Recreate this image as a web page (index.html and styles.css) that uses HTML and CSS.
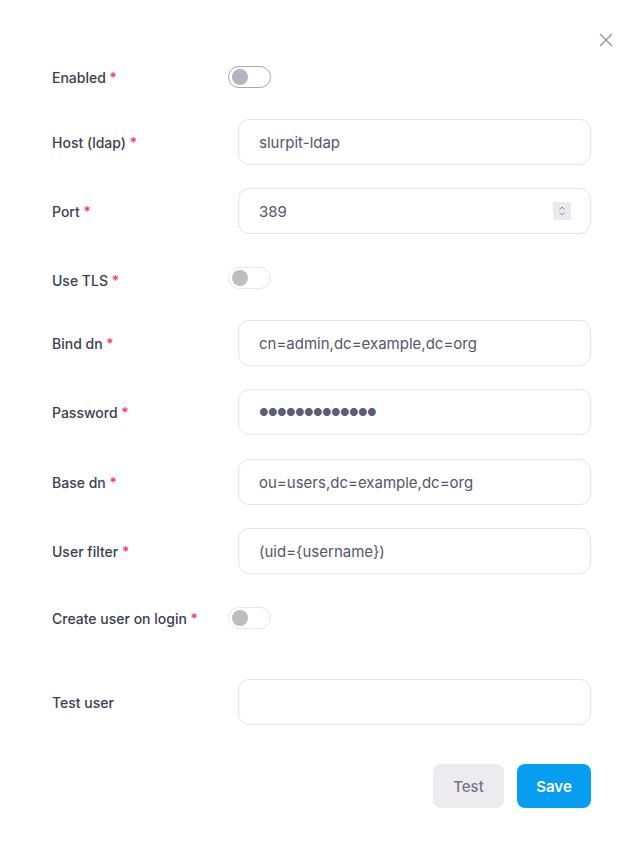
FILE: index.html
```html
<!DOCTYPE html>
<html>
<head>
<meta charset="utf-8">
<link rel="stylesheet" href="styles.css">
</head>
<body>
<div class="modal">
  <button class="close" aria-label="Close">
    <svg width="14" height="14" viewBox="0 0 14 14"><path d="M1.5 1.5L12.5 12.5M12.5 1.5L1.5 12.5" stroke="#9a9aae" stroke-width="1.5" stroke-linecap="round"/></svg>
  </button>
  <form class="form">
    <div class="row row-toggle r-enabled">
      <label class="label">Enabled <span class="req">*</span></label>
      <span class="toggle toggle-focus"><span class="knob"></span></span>
    </div>
    <div class="row">
      <label class="label">Host (ldap) <span class="req">*</span></label>
      <div class="input">slurpit-ldap</div>
    </div>
    <div class="row">
      <label class="label">Port <span class="req">*</span></label>
      <div class="input">389
        <span class="spin"><svg width="8" height="12" viewBox="0 0 8 12"><path d="M1.5 4.5L4 2L6.5 4.5M1.5 7.5L4 10L6.5 7.5" fill="none" stroke="#8a8a9a" stroke-width="1"/></svg></span>
      </div>
    </div>
    <div class="row row-toggle r-tls">
      <label class="label">Use TLS <span class="req">*</span></label>
      <span class="toggle"><span class="knob"></span></span>
    </div>
    <div class="row">
      <label class="label">Bind dn <span class="req">*</span></label>
      <div class="input">cn=admin,dc=example,dc=org</div>
    </div>
    <div class="row r-pw">
      <label class="label">Password <span class="req">*</span></label>
      <div class="input pw">●●●●●●●●●●●●●</div>
    </div>
    <div class="row">
      <label class="label">Base dn <span class="req">*</span></label>
      <div class="input">ou=users,dc=example,dc=org</div>
    </div>
    <div class="row">
      <label class="label">User filter <span class="req">*</span></label>
      <div class="input">(uid={username})</div>
    </div>
    <div class="row row-toggle r-create">
      <label class="label">Create user on login <span class="req">*</span></label>
      <span class="toggle"><span class="knob"></span></span>
    </div>
    <div class="row">
      <label class="label">Test user</label>
      <div class="input"></div>
    </div>
    <div class="actions">
      <button type="button" class="btn btn-test">Test</button>
      <button type="button" class="btn btn-save">Save</button>
    </div>
  </form>
</div>
</body>
</html>
```
FILE: styles.css
```css
* { box-sizing: border-box; }
html, body { margin: 0; padding: 0; background: #fff; }
body {
  font-family: Inter, "Noto Sans", sans-serif;
  width: 643px;
  height: 848px;
  overflow: hidden;
}
.modal {
  position: relative;
  padding: 54px 52px 0 52px;
}
.close {
  position: absolute;
  top: 33px;
  left: 599px;
  width: 14px;
  height: 14px;
  padding: 0;
  border: 0;
  background: none;
  display: flex;
}
.form {
  display: flex;
  flex-direction: column;
}
.row {
  display: flex;
  align-items: center;
  height: 46px;
  margin-bottom: 23px;
}
.label {
  width: 176px;
  flex: none;
  font-size: 14px;
  font-weight: 500;
  color: #3d3d4e;
}
.req { color: #f0366c; }
.input {
  margin-left: 10px;
  flex: 1;
  height: 46px;
  border: 1px solid #e4e4ee;
  border-radius: 11px;
  padding: 0 20px;
  display: flex;
  align-items: center;
  font-size: 15px;
  color: #55556b;
  position: relative;
}
.pw { font-size: 10.5px; letter-spacing: -0.6px; color: #5c5c72; }
.spin {
  position: absolute;
  right: 19px;
  top: 13px;
  width: 18px;
  height: 18px;
  background: #e9e9ef;
  display: flex;
  align-items: center;
  justify-content: center;
}
.toggle {
  width: 43px;
  height: 22px;
  border: 1px solid #e6e6ee;
  border-radius: 11px;
  display: flex;
  align-items: center;
  padding-left: 3px;
}
.knob {
  width: 16px;
  height: 16px;
  border-radius: 50%;
  background: #bdbdc2;
}
.toggle-focus { border-color: #a7a7b8; }
.toggle-focus .knob { background: #b3b3c4; }
.r-enabled { height: 40px; margin-top: 3px; margin-bottom: 22px; }
.r-tls { height: 40px; margin-bottom: 23px; align-items: flex-end; padding-bottom: 8px; }
.r-pw { margin-bottom: 24px; }
.r-create { height: 40px; margin-top: 1px; margin-bottom: 41px; }
.actions {
  display: flex;
  justify-content: flex-end;
  gap: 13px;
  margin-top: 16px;
}
.btn {
  height: 44px;
  border: 0;
  border-radius: 8px;
  font-family: Inter, "Noto Sans", sans-serif;
  font-size: 15px;
  font-weight: 500;
  padding: 0;
}
.btn-test { width: 71px; background: #ebebf0; color: #75758a; }
.btn-save { width: 74px; background: #079ef2; color: #fff; font-weight: 600; }
```
